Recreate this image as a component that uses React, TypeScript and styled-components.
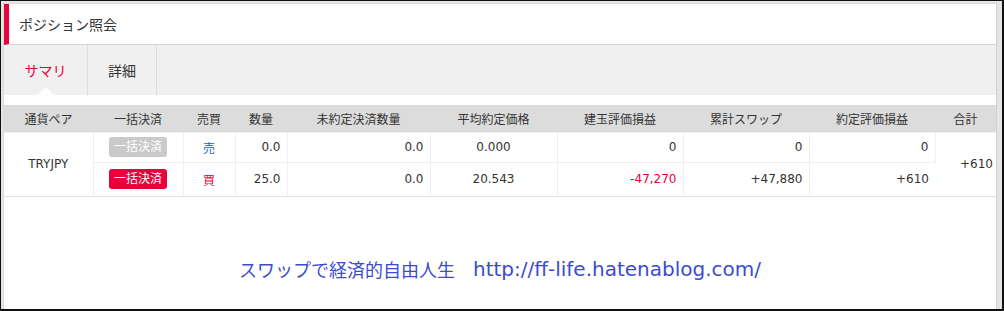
import React from "react";
import styled, { createGlobalStyle } from "styled-components";

const Global = createGlobalStyle`
  html, body { margin: 0; padding: 0; background: #fff; }
  body { width: 1004px; height: 311px; overflow: hidden; }
  * { box-sizing: border-box; }
`;

const FONT = `"DejaVu Sans", "Noto Sans CJK JP", sans-serif`;

const Frame = styled.div`
  width: 1004px;
  height: 311px;
  border: 1px solid #111;
  border-right-width: 2px;
  border-bottom-width: 2px;
  background: #e4e4e4;
  padding: 2px 5px 0 2px;
  font-family: ${FONT};
  color: #333;
`;

const Panel = styled.div`
  height: 100%;
  background: #fff;
  border-top: 1px solid #d8d8d8;
  border-left: 1px solid #d8d8d8;
  border-right: 1px solid #d0d0d0;
  display: flex;
  flex-direction: column;
`;

const Header = styled.div`
  height: 41px;
  border-bottom: 1px solid #d5d5d5;
  border-left: 5px solid #e8003a;
  display: flex;
  align-items: center;
  padding-left: 10px;
  font-size: 14px;
  color: #333;
`;

const Tabs = styled.div`
  height: 50px;
  background: #f0f0f0;
  display: flex;
`;

const Tab = styled.div<{ $active?: boolean; $w: number }>`
  position: relative;
  width: ${(p) => p.$w}px;
  border-right: 1px solid #dcdcdc;
  display: flex;
  align-items: center;
  justify-content: center;
  font-size: 14px;
  color: ${(p) => (p.$active ? "#e8003a" : "#333")};
  &::after {
    content: "";
    display: ${(p) => (p.$active ? "block" : "none")};
    position: absolute;
    left: 50%;
    bottom: 0;
    transform: translateX(-50%);
    border-left: 8px solid transparent;
    border-right: 8px solid transparent;
    border-bottom: 8px solid #fff;
  }
`;

const Gap = styled.div`
  height: 10px;
`;

const Table = styled.table`
  width: 992px;
  table-layout: fixed;
  border-collapse: collapse;
  font-size: 12px;
  border-bottom: 1px solid #e2e2e2;
`;

const Th = styled.th`
  height: 27px;
  background: #dcdcdc;
  font-weight: normal;
  color: #333;
  text-align: center;
  padding: 0;
`;

const Td = styled.td<{ $align?: "left" | "right" | "center"; $color?: string; $pr?: number }>`
  height: 30px;
  padding: 0 ${(p) => p.$pr ?? 6}px 0 0;
  text-align: ${(p) => p.$align ?? "right"};
  color: ${(p) => p.$color ?? "#333"};
  border-right: 1px solid #efefef;
  border-top: 1px solid #efefef;
  vertical-align: middle;
  &:last-child { border-right: none; }
`;

const TallTd = styled(Td)`
  height: 34px;
`;

const CloseBtn = styled.span<{ $active?: boolean }>`
  display: inline-block;
  width: 58px;
  height: 20px;
  line-height: 20px;
  border-radius: 3px;
  text-align: center;
  color: #fff;
  font-size: 12px;
  background: ${(p) => (p.$active ? "#e8003a" : "#cacaca")};
`;

const Footer = styled.div`
  flex: 1;
  display: flex;
  align-items: center;
  justify-content: center;
  padding-top: 32px;
  font-size: 18px;
  color: #3b4ccc;
  white-space: pre;
`;

const Url = styled.span`
  font-size: 20px;
`;

const cols = [89, 90, 52, 52, 143, 127, 126, 126, 126, 61];
const heads = ["通貨ペア", "一括決済", "売買", "数量", "未約定決済数量", "平均約定価格", "建玉評価損益", "累計スワップ", "約定評価損益", "合計"];

export default function App() {
  return (
    <>
      <Global />
      <Frame>
        <Panel>
          <Header>ポジション照会</Header>
          <Tabs>
            <Tab $active $w={84}>サマリ</Tab>
            <Tab $w={69}>詳細</Tab>
          </Tabs>
          <Gap />
          <Table>
            <colgroup>
              {cols.map((w, i) => (
                <col key={i} style={{ width: w }} />
              ))}
            </colgroup>
            <thead>
              <tr>
                {heads.map((h) => (
                  <Th key={h}>{h}</Th>
                ))}
              </tr>
            </thead>
            <tbody>
              <tr>
                <Td rowSpan={2} $align="center" $pr={0}>TRYJPY</Td>
                <Td $align="center" $pr={0}><CloseBtn>一括決済</CloseBtn></Td>
                <Td $align="center" $pr={0} $color="#1f5fb5">売</Td>
                <Td>0.0</Td>
                <Td>0.0</Td>
                <Td $align="center" $pr={0}>0.000</Td>
                <Td>0</Td>
                <Td>0</Td>
                <Td>0</Td>
                <Td rowSpan={2} $pr={3}>+610</Td>
              </tr>
              <tr>
                <TallTd $align="center" $pr={0}><CloseBtn $active>一括決済</CloseBtn></TallTd>
                <TallTd $align="center" $pr={0} $color="#e8003a">買</TallTd>
                <TallTd>25.0</TallTd>
                <TallTd>0.0</TallTd>
                <TallTd $align="center" $pr={0}>20.543</TallTd>
                <TallTd $color="#e8003a">-47,270</TallTd>
                <TallTd>+47,880</TallTd>
                <TallTd>+610</TallTd>
              </tr>
            </tbody>
          </Table>
          <Footer>
            {"スワップで経済的自由人生　"}
            <Url>http://ff-life.hatenablog.com/</Url>
          </Footer>
        </Panel>
      </Frame>
    </>
  );
}
